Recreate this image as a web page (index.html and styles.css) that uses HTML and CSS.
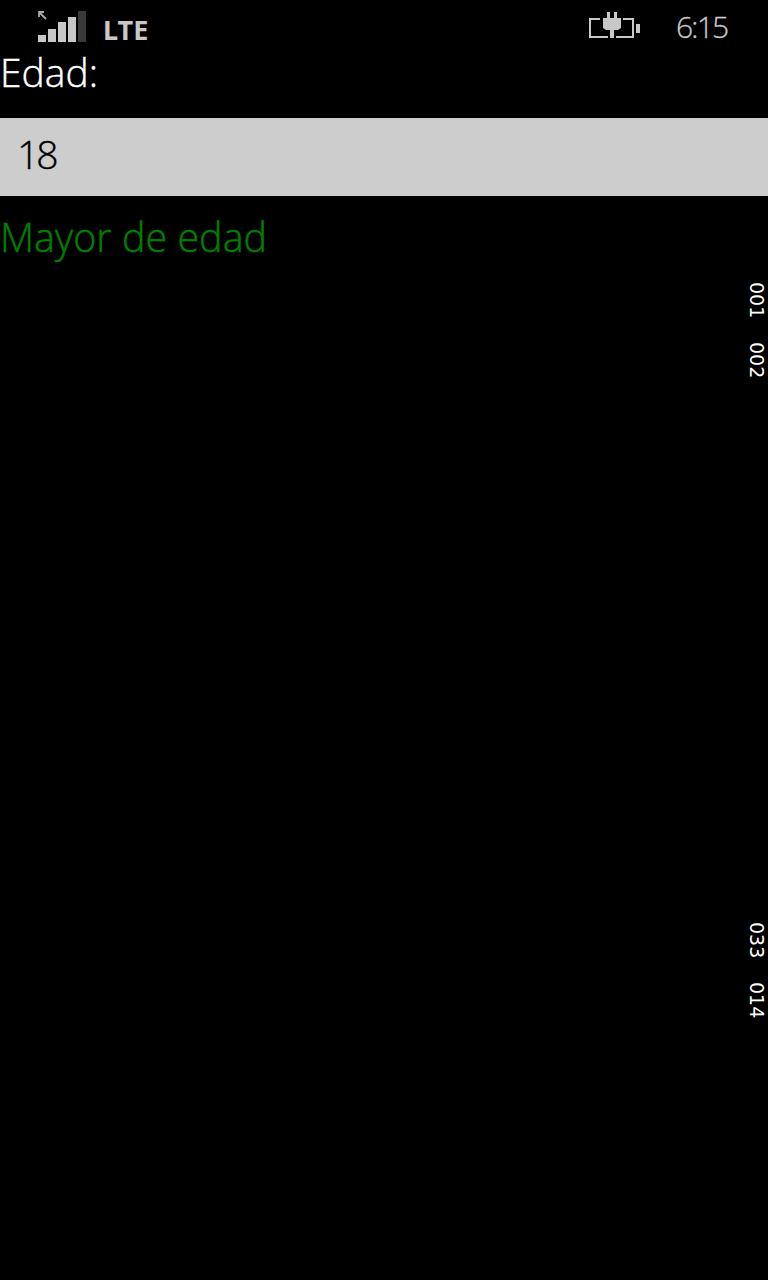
FILE: index.html
```html
<!DOCTYPE html>
<html lang="es">
<head>
    <meta charset="UTF-8">
    <meta name="viewport" content="width=device-width, initial-scale=1.0">
    <title>Edad</title>
    <link rel="stylesheet" href="styles.css">
</head>
<body>
    <header class="status">
        <svg class="signal" width="48" height="32" viewBox="0 0 48 32">
            <path d="M1 6 V1 H6 M1 1 L8 8" stroke="#a8a8a8" stroke-width="1.8" fill="none"/>
            <rect x="0" y="24" width="8" height="7" fill="#c8c8c8"/>
            <rect x="10" y="18" width="8" height="13" fill="#c8c8c8"/>
            <rect x="20" y="11" width="8" height="20" fill="#c8c8c8"/>
            <rect x="30" y="6" width="8" height="25" fill="#c8c8c8"/>
            <rect x="40" y="0" width="8" height="31" fill="#3a3a3a"/>
        </svg>
        <span class="lte">LTE</span>
        <svg class="battery" width="52" height="28" viewBox="0 0 52 28">
            <path d="M11 7 H1 V25 H19 M34 7 H44 V25 H27" stroke="#c8c8c8" stroke-width="2" fill="none"/>
            <path d="M14 6 H32 V16 L29 18 H17 L14 16 Z" fill="#c8c8c8"/>
            <rect x="18" y="0" width="3" height="6" fill="#c8c8c8"/>
            <rect x="25" y="0" width="3" height="6" fill="#c8c8c8"/>
            <rect x="21" y="18" width="4" height="8" fill="#c8c8c8"/>
            <rect x="47" y="12" width="4" height="9" fill="#c8c8c8"/>
        </svg>
        <span class="time">6:15</span>
    </header>

    <main class="form">
        <label class="label" for="edad">Edad:</label>
        <input class="input" id="edad" type="text" value="18">
        <p class="result">Mayor de edad</p>
    </main>

    <div class="counters counters-top">
        <span>001</span>
        <span>002</span>
    </div>
    <div class="counters counters-bottom">
        <span>033</span>
        <span>014</span>
    </div>
</body>
</html>
```

FILE: styles.css
```css
body {
    margin: 0;
    height: 1280px;
    overflow: hidden;
    position: relative;
    background-color: #000;
    font-family: "Open Sans", "Noto Sans", sans-serif;
}

.status {
    display: flex;
    align-items: flex-start;
    height: 50px;
    padding: 11px 40px 0 38px;
    box-sizing: border-box;
    color: #c8c8c8;
}

.signal {
    display: block;
}

.lte {
    margin: 3px 0 0 17px;
    font-family: "Noto Sans", sans-serif;
    font-size: 27px;
    line-height: 32px;
    font-weight: 700;
}

.battery {
    display: block;
    margin: 1px 0 0 auto;
}

.time {
    width: 52px;
    margin: -2px 0 0 35px;
    font-size: 30px;
    line-height: 36px;
    font-weight: 300;
    letter-spacing: -1.8px;
    white-space: nowrap;
    -webkit-text-stroke: 0.3px #c8c8c8;
}

.form {
    display: flex;
    flex-direction: column;
}

.label {
    height: 68px;
    color: #fff;
    font-size: 39px;
    line-height: 44px;
    font-weight: 300;
    -webkit-text-stroke: 0.4px #fff;
}

.input {
    height: 78px;
    padding: 0 17px 8px;
    box-sizing: border-box;
    border: none;
    border-radius: 0;
    background-color: #cdcdcd;
    color: #000;
    font-family: inherit;
    font-size: 39px;
    font-weight: 300;
    letter-spacing: -3px;
    -webkit-text-stroke: 0.4px #000;
}

.result {
    margin: 16px 0 0;
    color: #008000;
    font-size: 39.5px;
    line-height: 50px;
    font-weight: 300;
    -webkit-text-stroke: 0.4px #008000;
}

/* contadores de depuracion, sobre el contenido */
.counters {
    position: absolute;
    right: 1px;
    display: flex;
    gap: 24px;
    writing-mode: vertical-rl;
    color: #fff;
    font-family: "DejaVu Sans", sans-serif;
    font-size: 19px;
    line-height: 20px;
}

.counters-top {
    top: 282px;
}

.counters-bottom {
    top: 922px;
}
```
